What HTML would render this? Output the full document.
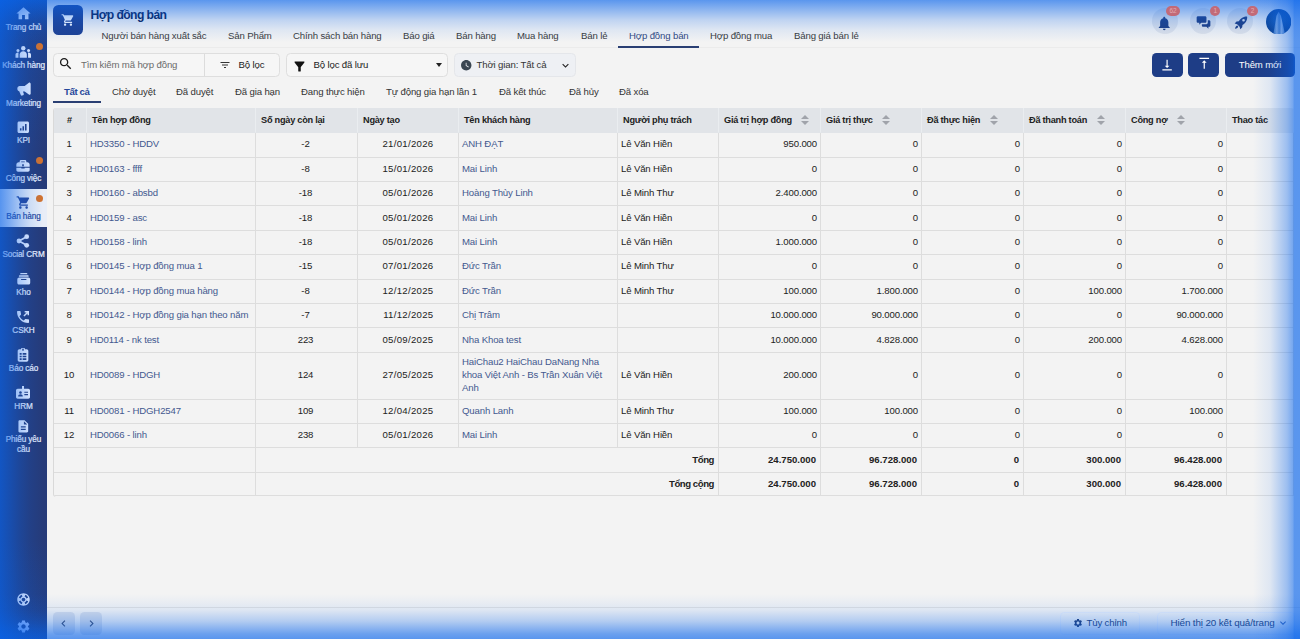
<!DOCTYPE html>
<html lang="vi">
<head>
<meta charset="utf-8">
<title>Hợp đồng bán</title>
<style>
*{box-sizing:border-box;margin:0;padding:0}
html,body{width:1300px;height:639px;overflow:hidden}
body{font-family:"Liberation Sans",sans-serif;background:#f3f3f3;color:#222;position:relative;font-size:9.6px;letter-spacing:-.14px}
.abs{position:absolute}
/* sidebar */
#side{position:absolute;left:0;top:0;width:47px;height:639px;background:linear-gradient(to bottom,rgba(8,100,235,.28) 0,rgba(8,100,235,.2) 40px,rgba(8,100,235,.08) 100px,rgba(8,100,235,0) 150px,rgba(8,100,235,0) 540px,rgba(8,100,235,.2) 639px),#263b79}
#side .lb{position:absolute;left:0;width:47px;line-height:10px;font-size:8.2px;letter-spacing:-.1px;text-align:center;white-space:nowrap;-webkit-text-stroke:.2px currentColor}
.dot{position:absolute;left:35.800px;width:7px;height:7px;border-radius:50%;background:#d2722e}
/* header */
#hicon{position:absolute;left:53px;top:5px;width:29.500px;height:29.500px;border-radius:5.500px;background:#1e4193}
#title{position:absolute;left:90.500px;top:5.500px;font-size:12.200px;letter-spacing:-.6px;font-weight:bold;color:#0a2052;line-height:18px;white-space:nowrap}
.nav{position:absolute;top:29.500px;line-height:12px;color:#3a3a3a;white-space:nowrap}
.nav.act{color:#34497e}
.badge{height:9.500px;border-radius:5px;background:#c26a78;color:#e3aab3;font-size:6.500px;line-height:9.500px;text-align:center;letter-spacing:0}
/* toolbar */
.box{position:absolute;top:53px;height:23.500px;border:1px solid #dedede;border-radius:4.500px;background:#f6f6f6}
.tb{position:absolute;line-height:12px;white-space:nowrap;color:#222}
.btn{position:absolute;top:53px;height:23.500px;border-radius:4.500px;background:#1e3d86}
.st{position:absolute;top:85.500px;line-height:12px;color:#333;white-space:nowrap}
/* table */
#tbl{position:absolute;left:53px;top:108px;width:1241px;height:388.800px;border-left:1px solid #d9d9d9;border-radius:3px;overflow:hidden;background:#f3f3f3}
.c{position:absolute;border-right:1px solid #dddddd;border-bottom:1px solid #dddddd;display:flex;align-items:center;line-height:13px;padding:0 3px 1.800px 3px;color:#222;overflow:hidden}
.c span{display:block;width:100%}
.c.h{background:#e1e4e8;font-weight:bold;font-size:9.200px;letter-spacing:-.25px;color:#222;padding:1.500px 4px 0 5px;white-space:nowrap;border-right-color:#eaedf0;border-bottom-color:#e1e4e8}
.c.h span{width:auto}
.c.hc span{width:100%;text-align:center}
.c.ctr span,.c.hc span{text-align:center;padding-right:2px}
.c.dat span{text-align:right;padding-right:21.500px;letter-spacing:.3px}
.c.num span{text-align:right}
.c.lnk{color:#43598f}
.c.b{font-weight:bold;font-size:9.600px;letter-spacing:0;padding-right:4px}
.c.bl{font-size:9.600px;letter-spacing:-.45px}
.srt{display:inline-block;position:relative;width:8px;height:10px;margin-left:9.500px;vertical-align:-2px}
.srt:before,.srt:after{content:"";position:absolute;left:0;border-left:4px solid transparent;border-right:4px solid transparent}
.srt:before{top:0;border-bottom:4px solid #a0a3aa}
.srt:after{top:5.500px;border-top:4px solid #a0a3aa}
/* footer */
#fline{position:absolute;left:47px;top:606.700px;width:1253px;height:1px;background:#e0e0e0}
.fb{position:absolute;top:611.500px;height:23px;border:1px solid rgba(232,238,250,.9);border-radius:4.500px;background:rgba(240,244,252,.2)}
/* glow */
.g{position:absolute;pointer-events:none}
#gT{left:0;top:0;width:1300px;height:42px;background:linear-gradient(to bottom,rgba(8,100,235,.65) 0,rgba(8,100,235,.43) 10px,rgba(8,100,235,.22) 20px,rgba(8,100,235,.085) 30px,rgba(8,100,235,0) 42px)}
#gB{left:0;top:594px;width:1300px;height:45px;background:linear-gradient(to top,rgba(8,100,235,.65) 0,rgba(8,100,235,.58) 5px,rgba(8,100,235,.27) 18px,rgba(8,100,235,.09) 29px,rgba(8,100,235,.03) 39px,rgba(8,100,235,0) 45px)}
#gR{left:1250px;top:0;width:50px;height:639px;background:linear-gradient(to left,rgba(8,100,235,.65) 0,rgba(8,100,235,.65) 5.500px,rgba(8,100,235,.52) 7.500px,rgba(8,100,235,.37) 13px,rgba(8,100,235,.25) 20px,rgba(8,100,235,.085) 30px,rgba(8,100,235,0) 47px)}
#gL{left:0;top:0;width:44px;height:639px;background:linear-gradient(to right,rgba(8,100,235,.65) 0,rgba(8,100,235,.47) 10px,rgba(8,100,235,.28) 20px,rgba(8,100,235,.12) 30px,rgba(8,100,235,0) 43px)}
</style>
</head>
<body>
<div id="side">
<svg class="abs" style="left:14.8px;top:5.3px;width:17px;height:17px;color:#edf2ff" viewBox="0 0 24 24" fill="#edf2ff"><path d="M10 20v-6h4v6h5v-8h3L12 3 2 12h3v8z"/></svg>
<div class="lb" style="top:22.7px;color:#edf2ff">Trang chủ</div>
<svg class="abs" style="left:15.05px;top:44.25px;width:16.5px;height:16.5px;color:#edf2ff" viewBox="0 0 24 24" fill="#edf2ff"><circle cx="12" cy="6.2" r="3.2"/><path d="M12 10.6c-3 0-5.2 1.9-5.2 4.6V20h10.400v-4.800c0-2.700-2.200-4.600-5.200-4.600z"/><circle cx="4.300" cy="9.300" r="2.200"/><path d="M5.300 12.600c-.3-.1-.7-.1-1-.1-2.100 0-3.600 1.400-3.600 3.300V20h4.300v-4.800c0-1 .1-1.800.3-2.600z"/><circle cx="19.700" cy="9.300" r="2.200"/><path d="M18.700 12.600c.3-.1.700-.1 1-.1 2.100 0 3.600 1.400 3.600 3.300V20h-4.300v-4.800c0-1-.1-1.800-.3-2.600z"/></svg>
<div class="lb" style="top:60.6px;color:#edf2ff">Khách hàng</div>
<div class="dot" style="top:43px"></div>
<svg class="abs" style="left:15.8px;top:81.3px;width:16px;height:16px;color:#edf2ff" viewBox="0 0 24 24" fill="#edf2ff"><path d="M21 2.500c-.6-.3-1.200-.2-1.700.2L13 7.400H5.500C3.600 7.400 2 9 2 10.900v1.200c0 1.700 1.200 3.100 2.800 3.400l2.400 5.600c.3.700 1.100 1.100 1.900.8l1.700-.6c.8-.3 1.200-1.200.9-2l-1.400-3.700H13l6.300 4.700c.5.400 1.100.5 1.700.2.600-.3 1-.9 1-1.500V4c0-.600-.400-1.200-1-1.500z"/></svg>
<div class="lb" style="top:98.5px;color:#edf2ff">Marketing</div>
<svg class="abs" style="left:16.35px;top:120.45px;width:14.5px;height:14.5px;color:#edf2ff" viewBox="0 0 24 24" fill="#edf2ff"><path fill-rule="evenodd" d="M5 2.500h14c1.400 0 2.500 1.100 2.500 2.500v14c0 1.400-1.100 2.500-2.500 2.500H5c-1.400 0-2.500-1.100-2.500-2.500V5c0-1.400 1.100-2.500 2.500-2.500zM6.500 13.500v4h2.600v-4zm4.200-3v7h2.600v-7zm4.200-4v11h2.600v-11z"/></svg>
<div class="lb" style="top:136.4px;color:#edf2ff">KPI</div>
<svg class="abs" style="left:15.3px;top:157.6px;width:16px;height:16px;color:#edf2ff" viewBox="0 0 24 24" fill="#edf2ff"><path fill-rule="evenodd" d="M9 3h6c1.100 0 2 .9 2 2v1.500h1.500c1.900 0 3.500 1.600 3.500 3.500v3H2v-3c0-1.900 1.600-3.500 3.500-3.500H7V5c0-1.100.9-2 2-2zm.3 2.200v1.300h5.400V5.200zM2 14.500h7.500v1.300h5v-1.300H22V18c0 1.400-1.100 2.500-2.500 2.500h-15C3.100 20.500 2 19.400 2 18zM10.800 9.500v3h2.400v-3z"/></svg>
<div class="lb" style="top:174.3px;color:#edf2ff">Công việc</div>
<div class="dot" style="top:156.7px"></div>
<div class="abs" style="left:0;top:188.9px;width:47px;height:38.300px;background:#e8edf7"></div>
<svg class="abs" style="left:15.8px;top:195.2px;width:15px;height:15px;color:#27479a" viewBox="0 0 24 24" fill="#27479a"><path d="M7 18c-1.100 0-1.990.9-1.990 2S5.900 22 7 22s2-.9 2-2-.9-2-2-2zM1 2v2h2l3.600 7.590-1.350 2.450c-.16.280-.25.610-.25.960 0 1.100.9 2 2 2h12v-2H7.420c-.14 0-.25-.11-.25-.25l.03-.12.9-1.630h7.450c.75 0 1.410-.41 1.750-1.030l3.580-6.490c.08-.14.120-.31.120-.48 0-.55-.45-1-1-1H5.210l-.94-2H1zm16 16c-1.100 0-1.990.9-1.990 2s.89 2 1.990 2 2-.9 2-2-.9-2-2-2z"/></svg>
<div class="lb" style="top:212.2px;color:#27479a">Bán hàng</div>
<div class="dot" style="top:194.6px"></div>
<svg class="abs" style="left:15.3px;top:232.9px;width:16px;height:16px;color:#edf2ff" viewBox="0 0 24 24" fill="#edf2ff"><circle cx="17.5" cy="5.5" r="3.6"/><circle cx="6" cy="12" r="3.6"/><circle cx="17.5" cy="18.5" r="3.6"/><path d="M6 12L17.5 5.5M6 12l11.500 6.500" stroke="currentColor" stroke-width="2.600" fill="none"/></svg>
<div class="lb" style="top:250.1px;color:#edf2ff">Social CRM</div>
<svg class="abs" style="left:15.55px;top:270.75px;width:15.5px;height:15.5px;color:#edf2ff" viewBox="0 0 24 24" fill="#edf2ff"><path d="M7.500 3h9c.6 0 1 .4 1 1v1.200h-11V4c0-.6.400-1 1-1zM5.500 6.500h13c.6 0 1 .4 1 1v1.300h-15V7.500c0-.6.400-1 1-1z"/><path fill-rule="evenodd" d="M5 10h14c1.700 0 3 1.300 3 3v5c0 1.700-1.300 3-3 3H5c-1.700 0-3-1.300-3-3v-5c0-1.700 1.300-3 3-3zm3.500 2.300c-.5 0-.8.300-.8.800s.3.800.8.800h7c.5 0 .8-.3.800-.8s-.3-.8-.8-.8z"/></svg>
<div class="lb" style="top:288px;color:#edf2ff">Kho</div>
<svg class="abs" style="left:15.3px;top:308.7px;width:16px;height:16px;color:#edf2ff" viewBox="0 0 24 24" fill="#edf2ff"><path d="M20 15.500c-1.250 0-2.450-.2-3.570-.57-.35-.11-.74-.03-1.020.24l-2.200 2.200c-2.830-1.440-5.150-3.750-6.590-6.590l2.200-2.210c.28-.26.360-.65.250-1C8.700 6.450 8.500 5.250 8.500 4c0-.55-.45-1-1-1H4c-.55 0-1 .45-1 1 0 9.390 7.610 17 17 17 .55 0 1-.45 1-1v-3.500c0-.55-.45-1-1-1z"/><path d="M14.500 3v2.200h2.750L12.600 9.850l1.550 1.550L18.800 6.750V9.500H21V3z"/></svg>
<div class="lb" style="top:325.9px;color:#edf2ff">CSKH</div>
<svg class="abs" style="left:15.3px;top:346.8px;width:16px;height:16px;color:#edf2ff" viewBox="0 0 24 24" fill="#edf2ff"><path fill-rule="evenodd" d="M9 2h6v1.500h2.500C18.900 3.500 20 4.600 20 6v13.500c0 1.400-1.100 2.500-2.500 2.500h-11C5.100 22 4 20.900 4 19.500V6c0-1.400 1.100-2.500 2.500-2.500H9zm1.500 1.300v1.900h3V3.300zM7 9v2.500h3V9zm4.500 0v2.500H17V9zM7 13v2.500h3V13zm4.500 0v2.500H17V13zM7 17v2.500h3V17zm4.500 0v2.500H17V17z"/></svg>
<div class="lb" style="top:363.8px;color:#edf2ff">Báo cáo</div>
<svg class="abs" style="left:15.3px;top:384.5px;width:16px;height:16px;color:#edf2ff" viewBox="0 0 24 24" fill="#edf2ff"><path fill-rule="evenodd" d="M10.500 1.500h3v4H20c1.400 0 2.500 1.100 2.500 2.500v10c0 1.400-1.100 2.500-2.500 2.500H4c-1.400 0-2.500-1.100-2.500-2.500V8c0-1.400 1.100-2.500 2.500-2.500h6.500zM8.200 9.300a2 2 0 1 0 .001 0zM4.700 17.200h7c0-2.200-1.500-3.300-3.500-3.300s-3.500 1.100-3.500 3.300zM14 10.200v1.600h5.500v-1.600zm0 3.400v1.600h5.500v-1.600z"/></svg>
<div class="lb" style="top:401.7px;color:#edf2ff">HRM</div>
<svg class="abs" style="left:16px;top:418.6px;width:14.6px;height:14.6px;color:#edf2ff" viewBox="0 0 24 24" fill="#edf2ff"><path d="M14 2H6c-1.100 0-1.990.9-1.990 2L4 20c0 1.100.89 2 1.990 2H18c1.100 0 2-.9 2-2V8l-6-6zm2 16H8v-2h8v2zm0-4H8v-2h8v2zm-3-5V3.500L18.500 9H13z"/></svg>
<div class="lb" style="top:434.500px;color:#edf2ff">Phiếu yêu</div>
<div class="lb" style="top:445px;color:#edf2ff">cầu</div>
<svg class="abs" style="left:16px;top:592px;width:15px;height:15px;color:#e4ecff" viewBox="0 0 24 24" fill="#e4ecff"><path d="M12 2C6.480 2 2 6.480 2 12s4.480 10 10 10 10-4.480 10-10S17.520 2 12 2zm7.460 7.120l-2.780 1.150c-.51-1.360-1.580-2.440-2.950-2.940l1.150-2.780c2.100.8 3.770 2.470 4.580 4.570zM12 15c-1.660 0-3-1.340-3-3s1.340-3 3-3 3 1.340 3 3-1.340 3-3 3zM9.130 4.540l1.170 2.780c-1.380.5-2.470 1.590-2.980 2.970L4.540 9.130c.81-2.110 2.480-3.780 4.590-4.590zM4.540 14.870l2.780-1.150c.51 1.380 1.590 2.460 2.970 2.960l-1.170 2.780c-2.100-.81-3.770-2.480-4.580-4.590zm10.340 4.590l-1.150-2.780c1.370-.51 2.450-1.590 2.950-2.970l2.780 1.170c-.81 2.100-2.480 3.770-4.580 4.580z"/></svg>
<svg class="abs" style="left:16px;top:618.5px;width:15px;height:15px;color:#a9c6ff" viewBox="0 0 24 24" fill="#a9c6ff"><path d="M19.140 12.940c.04-.3.060-.61.060-.94 0-.32-.02-.64-.07-.94l2.030-1.580c.18-.14.230-.41.120-.61l-1.920-3.320c-.12-.22-.37-.29-.59-.22l-2.390.96c-.5-.38-1.030-.7-1.620-.94l-.36-2.540c-.04-.24-.24-.41-.48-.41h-3.840c-.24 0-.43.170-.47.410l-.36 2.540c-.59.240-1.130.570-1.620.940l-2.390-.96c-.22-.08-.47 0-.59.220L2.740 8.870c-.12.210-.08.470.120.610l2.030 1.580c-.05.3-.09.630-.09.940s.02.640.07.940l-2.030 1.580c-.18.140-.23.410-.12.610l1.920 3.320c.12.220.37.290.59.220l2.390-.96c.5.380 1.030.7 1.620.94l.36 2.540c.05.240.24.410.48.410h3.840c.24 0 .44-.17.470-.41l.36-2.540c.59-.24 1.130-.56 1.620-.94l2.390.96c.22.080.47 0 .59-.22l1.920-3.320c.12-.22.070-.47-.12-.61l-2.010-1.580zM12 15.600c-1.980 0-3.600-1.620-3.600-3.600s1.620-3.600 3.600-3.600 3.600 1.620 3.600 3.600-1.620 3.600-3.600 3.600z"/></svg>
</div>
<div id="hicon"></div>
<div id="title">Hợp đồng bán</div>
<svg class="abs" style="left:60.6px;top:12.6px;width:14px;height:14px;color:#fff" viewBox="0 0 24 24" fill="#fff"><path d="M7 18c-1.100 0-1.990.9-1.990 2S5.900 22 7 22s2-.9 2-2-.9-2-2-2zM1 2v2h2l3.600 7.590-1.350 2.450c-.16.280-.25.610-.25.960 0 1.100.9 2 2 2h12v-2H7.420c-.14 0-.25-.11-.25-.25l.03-.12.9-1.630h7.450c.75 0 1.410-.41 1.750-1.030l3.580-6.490c.08-.14.120-.31.120-.48 0-.55-.45-1-1-1H5.210l-.94-2H1zm16 16c-1.100 0-1.990.9-1.990 2s.89 2 1.990 2 2-.9 2-2-.9-2-2-2z"/></svg>
<div class="nav" style="left:101.5px">Người bán hàng xuất sắc</div>
<div class="nav" style="left:228px">Sản Phẩm</div>
<div class="nav" style="left:293px">Chính sách bán hàng</div>
<div class="nav" style="left:403px">Báo giá</div>
<div class="nav" style="left:456px">Bán hàng</div>
<div class="nav" style="left:517px">Mua hàng</div>
<div class="nav" style="left:581px">Bán lẻ</div>
<div class="nav act" style="left:629px">Hợp đồng bán</div>
<div class="nav" style="left:710px">Hợp đồng mua</div>
<div class="nav" style="left:794px">Bảng giá bán lẻ</div>
<div class="abs" style="left:47px;top:47px;width:1253px;height:1px;background:#ebebeb"></div>
<div class="abs" style="left:618px;top:46.200px;width:81px;height:1.800px;background:#2a3f73"></div>
<div class="abs" style="left:1151.5px;top:8.250px;width:26px;height:26px;border-radius:50%;background:rgba(196,202,216,.42)"></div>
<svg class="abs" style="left:1156.25px;top:14.6px;width:16.5px;height:16.5px;color:#1f3d80" viewBox="0 0 24 24" fill="#1f3d80"><path d="M12 22c1.100 0 2-.9 2-2h-4c0 1.100.89 2 2 2zm6-6v-5c0-3.070-1.640-5.640-4.500-6.320V4c0-.83-.67-1.500-1.500-1.500s-1.500.67-1.500 1.500v.68C7.630 5.360 6 7.920 6 11v5l-2 2v1h16v-1l-2-2z"/></svg>
<div class="abs" style="left:1189.5px;top:8.250px;width:26px;height:26px;border-radius:50%;background:rgba(196,202,216,.42)"></div>
<svg class="abs" style="left:1196.25px;top:14.5px;width:15.7px;height:15.7px;color:#1f3d80" viewBox="0 0 24 24" fill="#1f3d80"><path d="M3 2h11c1.100 0 2 .9 2 2v6c0 1.100-.9 2-2 2H8l-3 3v-3H3c-1.100 0-2-.9-2-2V4c0-1.100.9-2 2-2z"/><path d="M18 8h2c1.100 0 2 .9 2 2v6c0 1.100-.9 2-2 2h-1v3l-3-3h-5c-1.100 0-2-.9-2-2v-2h7c1.100 0 2-.9 2-2z"/></svg>
<div class="abs" style="left:1227px;top:8.250px;width:26px;height:26px;border-radius:50%;background:rgba(196,202,216,.42)"></div>
<svg class="abs" style="left:1232.7px;top:15.1px;width:15.8px;height:15.8px;color:#1f3d80" viewBox="0 0 24 24" fill="#1f3d80"><path d="M21.500 2.500s-5.500-.8-10 3.700c-1 1-1.900 2.200-2.600 3.400l-3.600.4L2.500 12.800l3.800 1.200 3.700 3.700 1.200 3.800 2.800-2.800.4-3.600c1.200-.7 2.400-1.600 3.400-2.600 4.500-4.500 3.700-10 3.700-10zM16 10a2 2 0 1 1 0-4 2 2 0 0 1 0 4zM6.500 16c-1.500.3-3 1.800-3.500 5 3.200-.5 4.700-2 5-3.500z"/></svg>
<svg class="abs" style="left:1265.500px;top:8.800px;width:25.400px;height:25.400px" viewBox="-12.7 -12.7 25.4 25.4"><defs><radialGradient id="avg" cx="50%" cy="45%" r="55%"><stop offset="0" stop-color="#1d5fb4"/><stop offset="1" stop-color="#0c3f8c"/></radialGradient><linearGradient id="avt" x1="0" x2="1" y1="0" y2="0"><stop offset="0" stop-color="#3f78c4"/><stop offset=".3" stop-color="#a3c1e8"/><stop offset=".5" stop-color="#5c8ed0"/><stop offset=".7" stop-color="#b4cdef"/><stop offset="1" stop-color="#4a82ca"/></linearGradient><clipPath id="avc"><circle cx="0" cy="0" r="12.7"/></clipPath></defs><circle cx="0" cy="0" r="12.7" fill="url(#avg)"/><g clip-path="url(#avc)"><polygon points="-5.5,13 -2.2,-6 0,-10 2.2,-6 6.5,13" fill="url(#avt)" opacity=".85"/></g></svg>
<div class="box" style="left:53px;width:227px"></div>
<div class="abs" style="left:204px;top:54px;width:1px;height:22px;background:#dcdcdc"></div>
<svg class="abs" style="left:58.2px;top:55.7px;width:15.5px;height:15.5px;color:#1c1c1c" viewBox="0 0 24 24" fill="#1c1c1c"><path d="M15.500 14h-.79l-.28-.27C15.410 12.590 16 11.110 16 9.500 16 5.910 13.090 3 9.500 3S3 5.910 3 9.500 5.910 16 9.500 16c1.610 0 3.090-.59 4.230-1.570l.27.280v.79l5 4.990L20.490 19l-4.990-5zm-6 0C7.010 14 5 11.990 5 9.500S7.010 5 9.500 5 14 7.010 14 9.500 11.990 14 9.500 14z"/></svg>
<div class="tb" style="left:81px;top:58.500px;color:#6b6b6b">Tìm kiếm mã hợp đồng</div>
<svg class="abs" style="left:219px;top:58.5px;width:12px;height:12px;color:#333" viewBox="0 0 24 24" fill="#333"><path d="M10 18h4v-2h-4v2zM3 6v2h18V6H3zm3 7h12v-2H6v2z"/></svg>
<div class="tb" style="left:238.500px;top:58.500px">Bộ lọc</div>
<div class="box" style="left:286px;width:162px"></div>
<svg class="abs" style="left:291.5px;top:58.5px;width:15px;height:15px;color:#111" viewBox="0 0 24 24" fill="#111"><path d="M4.250 5.610C6.270 8.200 10 13 10 13v6c0 .55.45 1 1 1h2c.55 0 1-.45 1-1v-6s3.720-4.800 5.740-7.390c.51-.66.040-1.610-.79-1.610H5.040c-.83 0-1.300.95-.79 1.610z"/></svg>
<div class="tb" style="left:313.500px;top:58.500px">Bộ lọc đã lưu</div>
<div class="abs" style="left:435.500px;top:63px;border-left:3.500px solid transparent;border-right:3.500px solid transparent;border-top:4px solid #222"></div>
<div class="box" style="left:454px;width:122px;background:#eef0f4;border-color:#e4e6ea"></div>
<svg class="abs" style="left:460px;top:59px;width:12.5px;height:12.5px;color:#3a4652" viewBox="0 0 24 24" fill="#3a4652"><path d="M12 2C6.500 2 2 6.500 2 12s4.500 10 10 10 10-4.500 10-10S17.500 2 12 2zm4.200 14.200L11 13V7h1.500v5.200l4.500 2.700-.8 1.300z"/></svg>
<div class="tb" style="left:476.500px;top:58.500px;color:#333">Thời gian: Tất cả</div>
<svg class="abs" style="left:559px;top:58.5px;width:13px;height:13px;color:#222" viewBox="0 0 24 24" fill="#222"><path d="M7.410 8.590L12 13.170l4.590-4.580L18 10l-6 6-6-6 1.410-1.410z"/></svg>
<div class="btn" style="left:1152px;width:31px"></div>
<svg class="abs" style="left:1160.4px;top:57.9px;width:14.2px;height:14.2px;color:#fff" viewBox="0 0 24 24" fill="#fff"><path d="M16 13h-3V3h-2v10H8l4 4 4-4zM4 19v2h16v-2H4z"/></svg>
<div class="btn" style="left:1188px;width:31px"></div>
<svg class="abs" style="left:1196.5px;top:56.15px;width:14.5px;height:14.5px;color:#fff" viewBox="0 0 24 24" fill="#fff"><path d="M8 11h3v10h2V11h3l-4-4-4 4zM4 3v2h16V3H4z"/></svg>
<div class="btn" style="left:1225px;width:70px"></div>
<div class="tb" style="left:1225px;width:70px;top:58.500px;color:#fff;text-align:center">Thêm mới</div>
<div class="st" style="left:64px;color:#27479a;font-weight:bold;letter-spacing:-.4px">Tất cả</div>
<div class="st" style="left:112px">Chờ duyệt</div>
<div class="st" style="left:176px">Đã duyệt</div>
<div class="st" style="left:235px">Đã gia hạn</div>
<div class="st" style="left:301px">Đang thực hiện</div>
<div class="st" style="left:386px">Tự động gia hạn lần 1</div>
<div class="st" style="left:499px">Đã kết thúc</div>
<div class="st" style="left:569px">Đã hủy</div>
<div class="st" style="left:619px">Đã xóa</div>
<div class="abs" style="left:53px;top:101.300px;width:47.500px;height:1.800px;background:#2a3f73"></div>
<div id="tbl">
<div class="c h hc" style="left:0px;top:0px;width:33px;height:25px"><span>#</span></div>
<div class="c h" style="left:33px;top:0px;width:169px;height:25px"><span>Tên hợp đồng</span></div>
<div class="c h" style="left:202px;top:0px;width:102px;height:25px"><span>Số ngày còn lại</span></div>
<div class="c h" style="left:304px;top:0px;width:101px;height:25px"><span>Ngày tạo</span></div>
<div class="c h" style="left:405px;top:0px;width:159px;height:25px"><span>Tên khách hàng</span></div>
<div class="c h" style="left:564px;top:0px;width:101px;height:25px"><span>Người phụ trách</span></div>
<div class="c h" style="left:665px;top:0px;width:102px;height:25px"><span>Giá trị hợp đồng<i class="srt"></i></span></div>
<div class="c h" style="left:767px;top:0px;width:101px;height:25px"><span>Giá trị thực<i class="srt"></i></span></div>
<div class="c h" style="left:868px;top:0px;width:102px;height:25px"><span>Đã thực hiện<i class="srt"></i></span></div>
<div class="c h" style="left:970px;top:0px;width:102px;height:25px"><span>Đã thanh toán<i class="srt"></i></span></div>
<div class="c h" style="left:1072px;top:0px;width:101px;height:25px"><span>Công nợ<i class="srt"></i></span></div>
<div class="c h" style="left:1173px;top:0px;width:67px;height:25px"><span>Thao tác</span></div>
<div class="c ctr" style="left:0px;top:25px;width:33px;height:24.6px"><span>1</span></div>
<div class="c lnk" style="left:33px;top:25px;width:169px;height:24.6px"><span>HD3350 - HDDV</span></div>
<div class="c ctr" style="left:202px;top:25px;width:102px;height:24.6px"><span>-2</span></div>
<div class="c dat" style="left:304px;top:25px;width:101px;height:24.6px"><span>21/01/2026</span></div>
<div class="c lnk" style="left:405px;top:25px;width:159px;height:24.6px"><span>ANH ĐẠT</span></div>
<div class="c txt" style="left:564px;top:25px;width:101px;height:24.6px"><span>Lê Văn Hiền</span></div>
<div class="c num" style="left:665px;top:25px;width:102px;height:24.6px"><span>950.000</span></div>
<div class="c num" style="left:767px;top:25px;width:101px;height:24.6px"><span>0</span></div>
<div class="c num" style="left:868px;top:25px;width:102px;height:24.6px"><span>0</span></div>
<div class="c num" style="left:970px;top:25px;width:102px;height:24.6px"><span>0</span></div>
<div class="c num" style="left:1072px;top:25px;width:101px;height:24.6px"><span>0</span></div>
<div class="c txt" style="left:1173px;top:25px;width:67px;height:24.6px"><span></span></div>
<div class="c ctr" style="left:0px;top:49.6px;width:33px;height:24.4px"><span>2</span></div>
<div class="c lnk" style="left:33px;top:49.6px;width:169px;height:24.4px"><span>HD0163 - ffff</span></div>
<div class="c ctr" style="left:202px;top:49.6px;width:102px;height:24.4px"><span>-8</span></div>
<div class="c dat" style="left:304px;top:49.6px;width:101px;height:24.4px"><span>15/01/2026</span></div>
<div class="c lnk" style="left:405px;top:49.6px;width:159px;height:24.4px"><span>Mai Linh</span></div>
<div class="c txt" style="left:564px;top:49.6px;width:101px;height:24.4px"><span>Lê Văn Hiền</span></div>
<div class="c num" style="left:665px;top:49.6px;width:102px;height:24.4px"><span>0</span></div>
<div class="c num" style="left:767px;top:49.6px;width:101px;height:24.4px"><span>0</span></div>
<div class="c num" style="left:868px;top:49.6px;width:102px;height:24.4px"><span>0</span></div>
<div class="c num" style="left:970px;top:49.6px;width:102px;height:24.4px"><span>0</span></div>
<div class="c num" style="left:1072px;top:49.6px;width:101px;height:24.4px"><span>0</span></div>
<div class="c txt" style="left:1173px;top:49.6px;width:67px;height:24.4px"><span></span></div>
<div class="c ctr" style="left:0px;top:74px;width:33px;height:24.4px"><span>3</span></div>
<div class="c lnk" style="left:33px;top:74px;width:169px;height:24.4px"><span>HD0160 - absbd</span></div>
<div class="c ctr" style="left:202px;top:74px;width:102px;height:24.4px"><span>-18</span></div>
<div class="c dat" style="left:304px;top:74px;width:101px;height:24.4px"><span>05/01/2026</span></div>
<div class="c lnk" style="left:405px;top:74px;width:159px;height:24.4px"><span>Hoàng Thùy Linh</span></div>
<div class="c txt" style="left:564px;top:74px;width:101px;height:24.4px"><span>Lê Minh Thư</span></div>
<div class="c num" style="left:665px;top:74px;width:102px;height:24.4px"><span>2.400.000</span></div>
<div class="c num" style="left:767px;top:74px;width:101px;height:24.4px"><span>0</span></div>
<div class="c num" style="left:868px;top:74px;width:102px;height:24.4px"><span>0</span></div>
<div class="c num" style="left:970px;top:74px;width:102px;height:24.4px"><span>0</span></div>
<div class="c num" style="left:1072px;top:74px;width:101px;height:24.4px"><span>0</span></div>
<div class="c txt" style="left:1173px;top:74px;width:67px;height:24.4px"><span></span></div>
<div class="c ctr" style="left:0px;top:98.4px;width:33px;height:24.4px"><span>4</span></div>
<div class="c lnk" style="left:33px;top:98.4px;width:169px;height:24.4px"><span>HD0159 - asc</span></div>
<div class="c ctr" style="left:202px;top:98.4px;width:102px;height:24.4px"><span>-18</span></div>
<div class="c dat" style="left:304px;top:98.4px;width:101px;height:24.4px"><span>05/01/2026</span></div>
<div class="c lnk" style="left:405px;top:98.4px;width:159px;height:24.4px"><span>Mai Linh</span></div>
<div class="c txt" style="left:564px;top:98.4px;width:101px;height:24.4px"><span>Lê Văn Hiền</span></div>
<div class="c num" style="left:665px;top:98.4px;width:102px;height:24.4px"><span>0</span></div>
<div class="c num" style="left:767px;top:98.4px;width:101px;height:24.4px"><span>0</span></div>
<div class="c num" style="left:868px;top:98.4px;width:102px;height:24.4px"><span>0</span></div>
<div class="c num" style="left:970px;top:98.4px;width:102px;height:24.4px"><span>0</span></div>
<div class="c num" style="left:1072px;top:98.4px;width:101px;height:24.4px"><span>0</span></div>
<div class="c txt" style="left:1173px;top:98.4px;width:67px;height:24.4px"><span></span></div>
<div class="c ctr" style="left:0px;top:122.8px;width:33px;height:24.4px"><span>5</span></div>
<div class="c lnk" style="left:33px;top:122.8px;width:169px;height:24.4px"><span>HD0158 - linh</span></div>
<div class="c ctr" style="left:202px;top:122.8px;width:102px;height:24.4px"><span>-18</span></div>
<div class="c dat" style="left:304px;top:122.8px;width:101px;height:24.4px"><span>05/01/2026</span></div>
<div class="c lnk" style="left:405px;top:122.8px;width:159px;height:24.4px"><span>Mai Linh</span></div>
<div class="c txt" style="left:564px;top:122.8px;width:101px;height:24.4px"><span>Lê Văn Hiền</span></div>
<div class="c num" style="left:665px;top:122.8px;width:102px;height:24.4px"><span>1.000.000</span></div>
<div class="c num" style="left:767px;top:122.8px;width:101px;height:24.4px"><span>0</span></div>
<div class="c num" style="left:868px;top:122.8px;width:102px;height:24.4px"><span>0</span></div>
<div class="c num" style="left:970px;top:122.8px;width:102px;height:24.4px"><span>0</span></div>
<div class="c num" style="left:1072px;top:122.8px;width:101px;height:24.4px"><span>0</span></div>
<div class="c txt" style="left:1173px;top:122.8px;width:67px;height:24.4px"><span></span></div>
<div class="c ctr" style="left:0px;top:147.2px;width:33px;height:24.4px"><span>6</span></div>
<div class="c lnk" style="left:33px;top:147.2px;width:169px;height:24.4px"><span>HD0145 - Hợp đồng mua 1</span></div>
<div class="c ctr" style="left:202px;top:147.2px;width:102px;height:24.4px"><span>-15</span></div>
<div class="c dat" style="left:304px;top:147.2px;width:101px;height:24.4px"><span>07/01/2026</span></div>
<div class="c lnk" style="left:405px;top:147.2px;width:159px;height:24.4px"><span>Đức Trần</span></div>
<div class="c txt" style="left:564px;top:147.2px;width:101px;height:24.4px"><span>Lê Minh Thư</span></div>
<div class="c num" style="left:665px;top:147.2px;width:102px;height:24.4px"><span>0</span></div>
<div class="c num" style="left:767px;top:147.2px;width:101px;height:24.4px"><span>0</span></div>
<div class="c num" style="left:868px;top:147.2px;width:102px;height:24.4px"><span>0</span></div>
<div class="c num" style="left:970px;top:147.2px;width:102px;height:24.4px"><span>0</span></div>
<div class="c num" style="left:1072px;top:147.2px;width:101px;height:24.4px"><span>0</span></div>
<div class="c txt" style="left:1173px;top:147.2px;width:67px;height:24.4px"><span></span></div>
<div class="c ctr" style="left:0px;top:171.6px;width:33px;height:24.4px"><span>7</span></div>
<div class="c lnk" style="left:33px;top:171.6px;width:169px;height:24.4px"><span>HD0144 - Hợp đồng mua hàng</span></div>
<div class="c ctr" style="left:202px;top:171.6px;width:102px;height:24.4px"><span>-8</span></div>
<div class="c dat" style="left:304px;top:171.6px;width:101px;height:24.4px"><span>12/12/2025</span></div>
<div class="c lnk" style="left:405px;top:171.6px;width:159px;height:24.4px"><span>Đức Trần</span></div>
<div class="c txt" style="left:564px;top:171.6px;width:101px;height:24.4px"><span>Lê Minh Thư</span></div>
<div class="c num" style="left:665px;top:171.6px;width:102px;height:24.4px"><span>100.000</span></div>
<div class="c num" style="left:767px;top:171.6px;width:101px;height:24.4px"><span>1.800.000</span></div>
<div class="c num" style="left:868px;top:171.6px;width:102px;height:24.4px"><span>0</span></div>
<div class="c num" style="left:970px;top:171.6px;width:102px;height:24.4px"><span>100.000</span></div>
<div class="c num" style="left:1072px;top:171.6px;width:101px;height:24.4px"><span>1.700.000</span></div>
<div class="c txt" style="left:1173px;top:171.6px;width:67px;height:24.4px"><span></span></div>
<div class="c ctr" style="left:0px;top:196px;width:33px;height:24.4px"><span>8</span></div>
<div class="c lnk" style="left:33px;top:196px;width:169px;height:24.4px"><span>HD0142 - Hợp đồng gia hạn theo năm</span></div>
<div class="c ctr" style="left:202px;top:196px;width:102px;height:24.4px"><span>-7</span></div>
<div class="c dat" style="left:304px;top:196px;width:101px;height:24.4px"><span>11/12/2025</span></div>
<div class="c lnk" style="left:405px;top:196px;width:159px;height:24.4px"><span>Chị Trâm</span></div>
<div class="c txt" style="left:564px;top:196px;width:101px;height:24.4px"><span></span></div>
<div class="c num" style="left:665px;top:196px;width:102px;height:24.4px"><span>10.000.000</span></div>
<div class="c num" style="left:767px;top:196px;width:101px;height:24.4px"><span>90.000.000</span></div>
<div class="c num" style="left:868px;top:196px;width:102px;height:24.4px"><span>0</span></div>
<div class="c num" style="left:970px;top:196px;width:102px;height:24.4px"><span>0</span></div>
<div class="c num" style="left:1072px;top:196px;width:101px;height:24.4px"><span>90.000.000</span></div>
<div class="c txt" style="left:1173px;top:196px;width:67px;height:24.4px"><span></span></div>
<div class="c ctr" style="left:0px;top:220.4px;width:33px;height:24.2px"><span>9</span></div>
<div class="c lnk" style="left:33px;top:220.4px;width:169px;height:24.2px"><span>HD0114 - nk test</span></div>
<div class="c ctr" style="left:202px;top:220.4px;width:102px;height:24.2px"><span>223</span></div>
<div class="c dat" style="left:304px;top:220.4px;width:101px;height:24.2px"><span>05/09/2025</span></div>
<div class="c lnk" style="left:405px;top:220.4px;width:159px;height:24.2px"><span>Nha Khoa test</span></div>
<div class="c txt" style="left:564px;top:220.4px;width:101px;height:24.2px"><span></span></div>
<div class="c num" style="left:665px;top:220.4px;width:102px;height:24.2px"><span>10.000.000</span></div>
<div class="c num" style="left:767px;top:220.4px;width:101px;height:24.2px"><span>4.828.000</span></div>
<div class="c num" style="left:868px;top:220.4px;width:102px;height:24.2px"><span>0</span></div>
<div class="c num" style="left:970px;top:220.4px;width:102px;height:24.2px"><span>200.000</span></div>
<div class="c num" style="left:1072px;top:220.4px;width:101px;height:24.2px"><span>4.628.000</span></div>
<div class="c txt" style="left:1173px;top:220.4px;width:67px;height:24.2px"><span></span></div>
<div class="c ctr" style="left:0px;top:244.6px;width:33px;height:47.2px"><span>10</span></div>
<div class="c lnk" style="left:33px;top:244.6px;width:169px;height:47.2px"><span>HD0089 - HDGH</span></div>
<div class="c ctr" style="left:202px;top:244.6px;width:102px;height:47.2px"><span>124</span></div>
<div class="c dat" style="left:304px;top:244.6px;width:101px;height:47.2px"><span>27/05/2025</span></div>
<div class="c lnk" style="left:405px;top:244.6px;width:159px;height:47.2px"><span>HaiChau2 HaiChau DaNang Nha khoa Việt Anh - Bs Trần Xuân Việt Anh</span></div>
<div class="c txt" style="left:564px;top:244.6px;width:101px;height:47.2px"><span>Lê Văn Hiền</span></div>
<div class="c num" style="left:665px;top:244.6px;width:102px;height:47.2px"><span>200.000</span></div>
<div class="c num" style="left:767px;top:244.6px;width:101px;height:47.2px"><span>0</span></div>
<div class="c num" style="left:868px;top:244.6px;width:102px;height:47.2px"><span>0</span></div>
<div class="c num" style="left:970px;top:244.6px;width:102px;height:47.2px"><span>0</span></div>
<div class="c num" style="left:1072px;top:244.6px;width:101px;height:47.2px"><span>0</span></div>
<div class="c txt" style="left:1173px;top:244.6px;width:67px;height:47.2px"><span></span></div>
<div class="c ctr" style="left:0px;top:291.8px;width:33px;height:24px"><span>11</span></div>
<div class="c lnk" style="left:33px;top:291.8px;width:169px;height:24px"><span>HD0081 - HDGH2547</span></div>
<div class="c ctr" style="left:202px;top:291.8px;width:102px;height:24px"><span>109</span></div>
<div class="c dat" style="left:304px;top:291.8px;width:101px;height:24px"><span>12/04/2025</span></div>
<div class="c lnk" style="left:405px;top:291.8px;width:159px;height:24px"><span>Quanh Lanh</span></div>
<div class="c txt" style="left:564px;top:291.8px;width:101px;height:24px"><span>Lê Minh Thư</span></div>
<div class="c num" style="left:665px;top:291.8px;width:102px;height:24px"><span>100.000</span></div>
<div class="c num" style="left:767px;top:291.8px;width:101px;height:24px"><span>100.000</span></div>
<div class="c num" style="left:868px;top:291.8px;width:102px;height:24px"><span>0</span></div>
<div class="c num" style="left:970px;top:291.8px;width:102px;height:24px"><span>0</span></div>
<div class="c num" style="left:1072px;top:291.8px;width:101px;height:24px"><span>100.000</span></div>
<div class="c txt" style="left:1173px;top:291.8px;width:67px;height:24px"><span></span></div>
<div class="c ctr" style="left:0px;top:315.8px;width:33px;height:24.5px"><span>12</span></div>
<div class="c lnk" style="left:33px;top:315.8px;width:169px;height:24.5px"><span>HD0066 - linh</span></div>
<div class="c ctr" style="left:202px;top:315.8px;width:102px;height:24.5px"><span>238</span></div>
<div class="c dat" style="left:304px;top:315.8px;width:101px;height:24.5px"><span>05/01/2026</span></div>
<div class="c lnk" style="left:405px;top:315.8px;width:159px;height:24.5px"><span>Mai Linh</span></div>
<div class="c txt" style="left:564px;top:315.8px;width:101px;height:24.5px"><span>Lê Văn Hiền</span></div>
<div class="c num" style="left:665px;top:315.8px;width:102px;height:24.5px"><span>0</span></div>
<div class="c num" style="left:767px;top:315.8px;width:101px;height:24.5px"><span>0</span></div>
<div class="c num" style="left:868px;top:315.8px;width:102px;height:24.5px"><span>0</span></div>
<div class="c num" style="left:970px;top:315.8px;width:102px;height:24.5px"><span>0</span></div>
<div class="c num" style="left:1072px;top:315.8px;width:101px;height:24.5px"><span>0</span></div>
<div class="c txt" style="left:1173px;top:315.8px;width:67px;height:24.5px"><span></span></div>
<div class="c txt" style="left:0px;top:340.3px;width:33px;height:24.3px"><span></span></div>
<div class="c txt" style="left:33px;top:340.3px;width:169px;height:24.3px"><span></span></div>
<div class="c num b bl" style="left:202px;top:340.3px;width:463px;height:24.3px"><span>Tổng</span></div>
<div class="c num b" style="left:665px;top:340.3px;width:102px;height:24.3px"><span>24.750.000</span></div>
<div class="c num b" style="left:767px;top:340.3px;width:101px;height:24.3px"><span>96.728.000</span></div>
<div class="c num b" style="left:868px;top:340.3px;width:102px;height:24.3px"><span>0</span></div>
<div class="c num b" style="left:970px;top:340.3px;width:102px;height:24.3px"><span>300.000</span></div>
<div class="c num b" style="left:1072px;top:340.3px;width:101px;height:24.3px"><span>96.428.000</span></div>
<div class="c txt" style="left:1173px;top:340.3px;width:67px;height:24.3px"><span></span></div>
<div class="c txt" style="left:0px;top:364.6px;width:33px;height:23.7px"><span></span></div>
<div class="c txt" style="left:33px;top:364.6px;width:169px;height:23.7px"><span></span></div>
<div class="c num b bl" style="left:202px;top:364.6px;width:463px;height:23.7px"><span>Tổng cộng</span></div>
<div class="c num b" style="left:665px;top:364.6px;width:102px;height:23.7px"><span>24.750.000</span></div>
<div class="c num b" style="left:767px;top:364.6px;width:101px;height:23.7px"><span>96.728.000</span></div>
<div class="c num b" style="left:868px;top:364.6px;width:102px;height:23.7px"><span>0</span></div>
<div class="c num b" style="left:970px;top:364.6px;width:102px;height:23.7px"><span>300.000</span></div>
<div class="c num b" style="left:1072px;top:364.6px;width:101px;height:23.7px"><span>96.428.000</span></div>
<div class="c txt" style="left:1173px;top:364.6px;width:67px;height:23.7px"><span></span></div>
</div>
<div id="fline"></div>
<div class="fb" style="left:53px;width:21.500px;background:rgba(200,208,225,.6);border-color:transparent"></div>
<svg class="abs" style="left:57px;top:616.5px;width:13px;height:13px;color:#3c4a6a" viewBox="0 0 24 24" fill="#3c4a6a"><path d="M15.410 7.410L14 6l-6 6 6 6 1.410-1.410L10.830 12z"/></svg>
<div class="fb" style="left:80px;width:21.500px;background:rgba(200,208,225,.6);border-color:transparent"></div>
<svg class="abs" style="left:84.5px;top:616.5px;width:13px;height:13px;color:#3c4a6a" viewBox="0 0 24 24" fill="#3c4a6a"><path d="M10 6L8.590 7.410 13.170 12l-4.580 4.590L10 18l6-6z"/></svg>
<div class="fb" style="left:1059.500px;width:80px"></div>
<svg class="abs" style="left:1073px;top:617.5px;width:10px;height:10px;color:#233a6e" viewBox="0 0 24 24" fill="#233a6e"><path d="M19.140 12.940c.04-.3.060-.61.060-.94 0-.32-.02-.64-.07-.94l2.030-1.580c.18-.14.230-.41.120-.61l-1.920-3.320c-.12-.22-.37-.29-.59-.22l-2.390.96c-.5-.38-1.030-.7-1.620-.94l-.36-2.540c-.04-.24-.24-.41-.48-.41h-3.840c-.24 0-.43.170-.47.410l-.36 2.540c-.59.240-1.130.570-1.620.940l-2.390-.96c-.22-.08-.47 0-.59.220L2.740 8.870c-.12.210-.08.470.120.610l2.030 1.580c-.05.3-.09.630-.09.940s.02.640.07.940l-2.030 1.580c-.18.140-.23.410-.12.610l1.920 3.320c.12.220.37.290.59.220l2.390-.96c.5.380 1.030.7 1.620.94l.36 2.540c.05.240.24.410.48.410h3.840c.24 0 .44-.17.470-.41l.36-2.540c.59-.24 1.130-.56 1.620-.94l2.390.96c.22.080.47 0 .59-.22l1.920-3.320c.12-.22.070-.47-.12-.61l-2.010-1.580zM12 15.600c-1.980 0-3.600-1.620-3.600-3.600s1.620-3.600 3.600-3.600 3.600 1.620 3.600 3.600-1.620 3.600-3.600 3.600z"/></svg>
<div class="tb" style="left:1086.500px;top:617px;color:#233a6e">Tùy chỉnh</div>
<div class="fb" style="left:1156.500px;width:138px"></div>
<div class="tb" style="left:1170.500px;top:617px;color:#233a6e;font-size:9.900px">Hiển thị 20 kết quả/trang</div>
<svg class="abs" style="left:1276.5px;top:616.5px;width:12px;height:12px;color:#3b5ea8" viewBox="0 0 24 24" fill="#3b5ea8"><path d="M7.410 8.590L12 13.170l4.590-4.580L18 10l-6 6-6-6 1.410-1.410z"/></svg>
<div class="g" id="gT"></div>
<div class="g" id="gB"></div>
<div class="g" id="gR"></div>
<div class="g" id="gL"></div>
<div class="abs badge" style="left:1166.2px;top:6.300px;width:13.8px">62</div>
<div class="abs badge" style="left:1210.05px;top:6.300px;width:10.4px">1</div>
<div class="abs badge" style="left:1247.3px;top:6.300px;width:10.4px">2</div>
</body>
</html>
